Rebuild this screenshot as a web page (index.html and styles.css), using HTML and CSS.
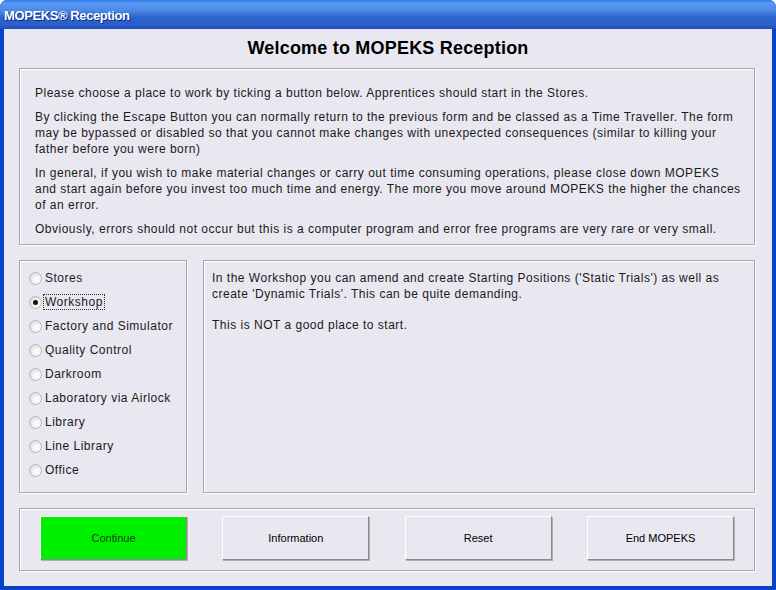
FILE: index.html
```html
<!DOCTYPE html>
<html lang="en">
<head>
    <meta charset="UTF-8">
    <title>MOPEKS Reception</title>
    <link rel="stylesheet" href="styles.css">
</head>
<body>
    <div class="window">
        <div class="title-bar">MOPEKS&reg; Reception</div>
        <div class="client">
            <h1 class="heading">Welcome to MOPEKS Reception</h1>

            <div class="panel intro">
                <p>Please choose a place to work by ticking a button below. Apprentices should start in the Stores.</p>
                <p>By clicking the Escape Button you can normally return to the previous form and be classed as a Time Traveller. The form may be bypassed or disabled so that you cannot make changes with unexpected consequences (similar to killing your father before you were born)</p>
                <p>In general, if you wish to make material changes or carry out time consuming operations, please close down MOPEKS and start again before you invest too much time and energy. The more you move around MOPEKS the higher the chances of an error.</p>
                <p>Obviously, errors should not occur but this is a computer program and error free programs are very rare or very small.</p>
            </div>

            <div class="middle">
                <div class="panel places">
                    <label class="place"><span class="radio"></span><span>Stores</span></label>
                    <label class="place"><span class="radio checked"></span><span class="focus">Workshop</span></label>
                    <label class="place"><span class="radio"></span><span>Factory and Simulator</span></label>
                    <label class="place"><span class="radio"></span><span>Quality Control</span></label>
                    <label class="place"><span class="radio"></span><span>Darkroom</span></label>
                    <label class="place"><span class="radio"></span><span>Laboratory via Airlock</span></label>
                    <label class="place"><span class="radio"></span><span>Library</span></label>
                    <label class="place"><span class="radio"></span><span>Line Library</span></label>
                    <label class="place"><span class="radio"></span><span>Office</span></label>
                </div>
                <div class="panel description">
                    <p>In the Workshop you can amend and create Starting Positions ('Static Trials') as well as create 'Dynamic Trials'. This can be quite demanding.</p>
                    <p>This is NOT a good place to start.</p>
                </div>
            </div>

            <div class="panel buttons">
                <button class="btn btn-go">Continue</button>
                <button class="btn">Information</button>
                <button class="btn">Reset</button>
                <button class="btn">End MOPEKS</button>
            </div>
        </div>
    </div>
</body>
</html>
```

FILE: styles.css
```css
body {
    margin: 0;
    font-family: "Liberation Sans", Arial, sans-serif;
    background-color: #ffffff;
}
.window {
    width: 776px;
    height: 590px;
    display: flex;
    flex-direction: column;
    background-color: #0842c8;
    border-radius: 7px 7px 0 0;
    overflow: hidden;
}
.title-bar {
    height: 29px;
    flex: none;
    box-sizing: border-box;
    padding: 8px 0 0 4px;
    color: white;
    font-family: "Liberation Sans", Arial, sans-serif;
    font-weight: bold;
    font-size: 13px;
    letter-spacing: -0.4px;
    text-shadow: 1px 1px 0 #0a2a80;
    background: linear-gradient(#2f7ef0 0%, #5a9af0 12%, #4d8ae8 35%, #2d63cc 60%, #2a5fcb 85%, #1e4fb8 100%);
}
.client {
    flex: 1;
    margin: 0 4px 4px 4px;
    background-color: #e9e8f0;
    display: flex;
    flex-direction: column;
    padding: 0 17px 0 15px;
}
.heading {
    margin: 0;
    flex: none;
    height: 39px;
    line-height: 39px;
    font-size: 18px;
    letter-spacing: 0.2px;
    text-align: center;
    color: #000;
    padding-left: 2px;
}
.panel {
    border: 1px solid #a6a6ac;
    box-shadow: inset 1px 1px 0 #ffffff, 1px 1px 0 #ffffff;
    box-sizing: border-box;
    flex: none;
}
.intro {
    height: 177px;
    padding: 16px 10px 0 15px;
    font-size: 12px;
    letter-spacing: 0.5px;
    line-height: 16px;
    color: #1a1a1a;
}
.intro p {
    margin: 0 0 8px 0;
}
.middle {
    display: flex;
    flex: none;
    gap: 16px;
    margin-top: 15px;
    height: 233px;
}
.places {
    width: 168px;
    padding: 5px 0 0 9px;
    display: flex;
    flex-direction: column;
}
.place {
    height: 24px;
    display: flex;
    align-items: center;
    gap: 3px;
    font-size: 12px;
    letter-spacing: 0.5px;
    color: #1a1a1a;
}
.radio {
    width: 11px;
    height: 11px;
    border-radius: 50%;
    border: 1px solid #b8b8b8;
    background: radial-gradient(circle at 65% 65%, #ffffff 0%, #f2f2f2 40%, #cfcfd4 100%);
    position: relative;
    flex: none;
}
.radio.checked::after {
    content: "";
    position: absolute;
    left: 3px;
    top: 3px;
    width: 5px;
    height: 5px;
    border-radius: 50%;
    background-color: #111;
}
.focus {
    outline: 1px dotted #333;
    padding: 0 1px;
    margin-left: -1px;
}
.description {
    flex: 1;
    padding: 9px 8px;
    font-size: 12px;
    letter-spacing: 0.5px;
    line-height: 16px;
    color: #1a1a1a;
}
.description p {
    margin: 0 0 15px 0;
}
.buttons {
    margin-top: 15px;
    height: 63px;
    display: flex;
    justify-content: space-between;
    padding: 7px 20px 0 20px;
}
.btn {
    width: 147px;
    height: 44px;
    font-family: "Liberation Sans", Arial, sans-serif;
    font-size: 11px;
    color: #000;
    background-color: #e9e8f0;
    border: 1px solid;
    border-color: #ffffff #8a8a8a #8a8a8a #ffffff;
    box-shadow: 1px 1px 0 #b0b0b0;
}
.btn-go {
    background-color: #00f000;
    color: #104010;
}
```
